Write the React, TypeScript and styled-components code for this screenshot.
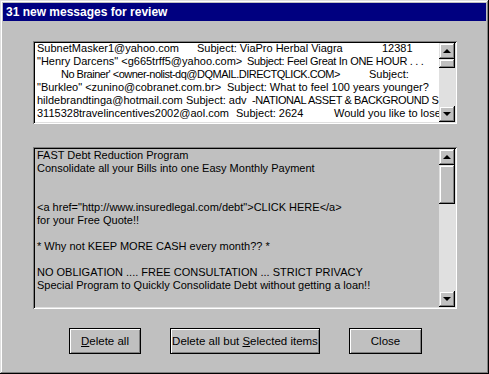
import React from 'react';
import styled, { createGlobalStyle } from 'styled-components';

const GlobalStyle = createGlobalStyle`
  html, body {
    margin: 0;
    padding: 0;
    background: #c0c0c0;
  }
`;

// each header row: [start x within the list, text, letter-spacing]
type Seg = [number, string, number?];

const headers: Seg[][] = [
  [
    [0, 'SubnetMasker1@yahoo.com'],
    [160, 'Subject: ViaPro Herbal Viagra'],
    [345, '12381'],
  ],
  [
    [0, '"Henry Darcens" <g665trff5@yahoo.com>'],
    [210, 'Subject: Feel Great In ONE HOUR . . .', -0.3],
  ],
  [
    [24, "No Brainer' <owner-nolist-dq@DQMAIL.DIRECTQLICK.COM>", -0.5],
    [308, 'Subject:'],
    [381, 'Need'],
  ],
  [
    [0, '"Burkleo" <zunino@cobranet.com.br>'],
    [190, 'Subject: What to feel 100 years younger?'],
  ],
  [
    [0, 'hildebrandtinga@hotmail.com'],
    [149, 'Subject: adv'],
    [215, '-NATIONAL ASSET & BACKGROUND S', -0.4],
  ],
  [
    [0, '3115328travelincentives2002@aol.com'],
    [199, 'Subject: 2624'],
    [297, 'Would you like to lose'],
  ],
  [
    [0, 'EEOSU009 Ed@yahoo.com'],
    [160, 'Subject: FREE BOOK Quality'],
  ],
];

const body = [
  'FAST Debt Reduction Program',
  'Consolidate all your Bills into one Easy Monthly Payment',
  '',
  '',
  '<a href="http://www.insuredlegal.com/debt">CLICK HERE</a>',
  'for your Free Quote!!',
  '',
  '* Why not KEEP MORE CASH every month?? *',
  '',
  'NO OBLIGATION .... FREE CONSULTATION ... STRICT PRIVACY',
  'Special Program to Quickly Consolidate Debt without getting a loan!!',
];

const HeaderRow = ({ segs }: { segs: Seg[] }) => (
  <Line>
    {segs.map(([at, text, ls], i) => {
      const next = segs[i + 1];
      const prev = i === 0 ? 0 : at;
      return (
        <Cell
          key={i}
          indent={i === 0 ? at : 0}
          w={next ? next[0] - prev : 0}
          ls={ls || 0}
        >
          {text}
        </Cell>
      );
    })}
  </Line>
);

const App = () => {
  return (
    <>
      <GlobalStyle />
      <Window>
        <TitleBar>31 new messages for review</TitleBar>
        <Content>
          <Field height={83} bg="#fff">
            <Lines shift={-1}>
              {headers.map((h, i) => (
                <HeaderRow key={i} segs={h} />
              ))}
            </Lines>
            <ScrollBar>
              <ArrowButton>
                <Arrow up />
              </ArrowButton>
              <Track>
                <Thumb size={9} />
              </Track>
              <ArrowButton>
                <Arrow />
              </ArrowButton>
            </ScrollBar>
          </Field>
          <Field height={162} bg="#c0c0c0">
            <Lines shift={0}>
              {body.map((b, i) => (
                <Line key={i}>{b || ' '}</Line>
              ))}
            </Lines>
            <ScrollBar>
              <ArrowButton>
                <Arrow up />
              </ArrowButton>
              <Track>
                <Thumb size={39} />
              </Track>
              <ArrowButton>
                <Arrow />
              </ArrowButton>
            </ScrollBar>
          </Field>
          <ButtonRow>
            <Button w={72}>
              <span>
                <u>D</u>elete all
              </span>
            </Button>
            <Button w={150}>
              <span>
                Delete all but <u>S</u>elected items
              </span>
            </Button>
            <Button w={73}>
              <span>Close</span>
            </Button>
          </ButtonRow>
        </Content>
      </Window>
    </>
  );
};

const Window = styled.div`
  width: 489px;
  height: 374px;
  box-sizing: border-box;
  padding: 3px;
  background: #c0c0c0;
  box-shadow: inset -1px -1px 0 #000, inset 1px 1px 0 #dfdfdf,
    inset -2px -2px 0 #808080, inset 2px 2px 0 #fff;
  font-family: 'Liberation Sans', Arial, sans-serif;
  font-size: 11px;
  color: #000;
`;

const TitleBar = styled.div`
  height: 18px;
  background: #000080;
  color: #fff;
  font-weight: bold;
  font-size: 12px;
  padding-left: 3px;
  display: flex;
  align-items: center;
`;

const Content = styled.div`
  padding: 20px 0 0 30px;
  display: flex;
  flex-direction: column;
  gap: 23px;
`;

const Field = styled.div<{ height: number; bg: string }>`
  width: 424px;
  height: ${(p) => p.height}px;
  box-sizing: border-box;
  padding: 2px;
  background: ${(p) => p.bg};
  box-shadow: inset 1px 1px 0 #808080, inset -1px -1px 0 #fff,
    inset 2px 2px 0 #000, inset -2px -2px 0 #dfdfdf;
  display: flex;
  overflow: hidden;
`;

const Lines = styled.div<{ shift: number }>`
  flex: 1;
  overflow: hidden;
  padding: 0 2px;
  margin-top: ${(p) => p.shift}px;
`;

const Line = styled.div`
  white-space: pre;
  line-height: 13px;
  height: 13px;
`;

const Cell = styled.span<{ indent: number; w: number; ls: number }>`
  display: inline-block;
  margin-left: ${(p) => p.indent}px;
  ${(p) => (p.w ? `width: ${p.w}px;` : '')}
  letter-spacing: ${(p) => p.ls}px;
  vertical-align: top;
`;

const ScrollBar = styled.div`
  width: 16px;
  flex-shrink: 0;
  display: flex;
  flex-direction: column;
`;

const raised = `
  background: #c0c0c0;
  box-sizing: border-box;
  box-shadow: inset -1px -1px 0 #000, inset 1px 1px 0 #dfdfdf,
    inset -2px -2px 0 #808080, inset 2px 2px 0 #fff;
`;

const ArrowButton = styled.div`
  ${raised}
  height: 16px;
  display: flex;
  align-items: center;
  justify-content: center;
`;

const Arrow = styled.div<{ up?: boolean }>`
  width: 0;
  height: 0;
  border-left: 4px solid transparent;
  border-right: 4px solid transparent;
  ${(p) =>
    p.up ? 'border-bottom: 4px solid #000;' : 'border-top: 4px solid #000;'}
`;

const Track = styled.div`
  flex: 1;
  background: #e0e0e0;
`;

const Thumb = styled.div<{ size: number }>`
  ${raised}
  height: ${(p) => p.size}px;
`;

const ButtonRow = styled.div`
  display: flex;
  gap: 29px;
  padding-left: 36px;
  margin-top: -4px;
`;

const Button = styled.div<{ w: number }>`
  width: ${(p) => p.w}px;
  height: 26px;
  box-sizing: border-box;
  border: 1px solid #000;
  background: #c0c0c0;
  box-shadow: inset 1px 1px 0 #fff, inset -1px -1px 0 #808080;
  display: flex;
  align-items: center;
  justify-content: center;
  font-size: 11.5px;
  white-space: pre;
  u {
    text-decoration: underline;
  }
`;

export default App;
